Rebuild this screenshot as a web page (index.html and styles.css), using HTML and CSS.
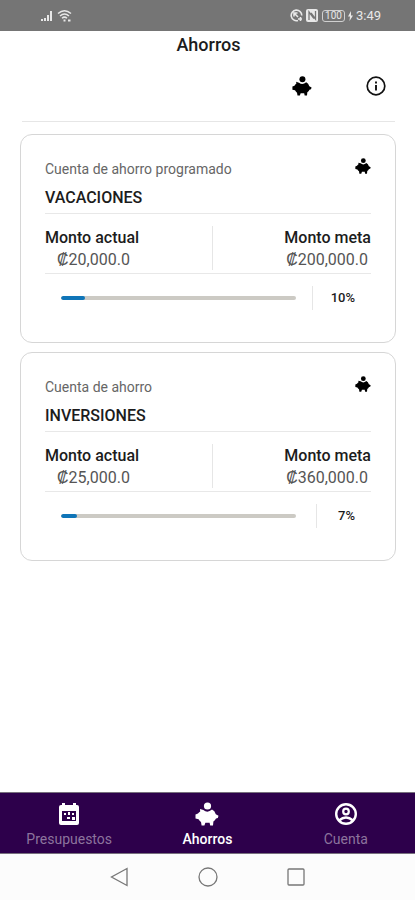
FILE: index.html
```html
<!DOCTYPE html>
<html lang="es">
<head>
    <meta charset="UTF-8">
    <meta name="viewport" content="width=device-width, initial-scale=1.0">
    <title>Ahorros</title>
    <link rel="stylesheet" href="styles.css">
</head>
<body>

    <svg class="sprite" aria-hidden="true">
        <symbol id="pig" viewBox="0 0 24 24">
            <circle cx="12.5" cy="4" r="3.6"/>
            <path d="M5 7 8.400 8Q12.500 11.500 17 7.600Q19.800 9 20.800 12.200L23.500 13.800 22.800 16 21 16.600Q20 18.600 18.400 19.400L18 23.500H15.200L14.600 20.800H10.400L9.400 23.500H6.600L6 20Q4.400 18.800 3.600 17.200L.5 16.400V12.600L3 11.600Q3.800 10.200 5.200 9.400Z"/>
        </symbol>
    </svg>

    <div class="status-bar">
        <div class="status-group">
            <svg width="13" height="12" viewBox="0 0 13 12" fill="#e8e8e8">
                <path d="M0 9h2v2H0zM3 8h2v3H3zM6 5h2v6H6zM9 1h2v10H9z"/>
            </svg>
            <svg width="16" height="14" viewBox="0 0 16 14" fill="none" stroke="#e8e8e8" stroke-width="1.5">
                <path d="M1 4.5Q7.5-1 14 4.5M3 7Q7.5 3 12 7M5 9.2Q7.5 7 10 9.2"/>
                <path d="M6.500 11.500h2M11 11.500h2.500" stroke-width="2"/>
            </svg>
        </div>
        <div class="status-group">
            <svg width="13" height="13" viewBox="0 0 13 13" fill="none" stroke="#e8e8e8" stroke-width="1.6">
                <path d="M8 11.500A5.300 5.300 0 1 1 11.800 6.500M4 7.500V4h3.500M4.500 4.500 8 8M8 10h4M10.500 8v4"/>
            </svg>
            <svg width="13" height="13" viewBox="0 0 13 13">
                <rect width="12" height="13" rx="2" fill="#e8e8e8"/>
                <path d="M3 11V3l5 6.500M9.500 2v8L5 4" fill="none" stroke="#757575" stroke-width="1.300"/>
            </svg>
            <span class="battery">100</span>
            <svg width="5" height="10" viewBox="0 0 5 10" fill="#e8e8e8"><path d="M3 0 0 5.500h2L1.500 10 5 4.500H3z"/></svg>
            <span class="clock">3:49</span>
        </div>
    </div>

    <header>
        <h1>Ahorros</h1>
        <div class="actions">
            <button type="button" aria-label="Nuevo ahorro">
                <svg width="20" height="20"><use href="#pig"/></svg>
            </button>
            <button type="button" aria-label="Información">
                <svg width="20" height="20" viewBox="0 0 20 20" fill="none" stroke="#111">
                    <circle cx="10" cy="10" r="8.800" stroke-width="1.700"/>
                    <path d="M10 9v5.500M10 5.500v2" stroke-width="1.900"/>
                </svg>
            </button>
        </div>
    </header>

    <main>
        <section class="card">
            <div class="card-top">
                <div>
                    <p class="type">Cuenta de ahorro programado</p>
                    <h2>VACACIONES</h2>
                </div>
                <svg width="16" height="16"><use href="#pig"/></svg>
            </div>
            <div class="amounts">
                <div class="amount">
                    <h3>Monto actual</h3>
                    <p>₡20,000.0</p>
                </div>
                <div class="amount goal">
                    <h3>Monto meta</h3>
                    <p>₡200,000.0</p>
                </div>
            </div>
            <div class="progress-row">
                <progress value="10" max="100" aria-label="Avance de vacaciones"></progress>
                <span class="percent">10%</span>
            </div>
        </section>

        <section class="card">
            <div class="card-top">
                <div>
                    <p class="type">Cuenta de ahorro</p>
                    <h2>INVERSIONES</h2>
                </div>
                <svg width="16" height="16"><use href="#pig"/></svg>
            </div>
            <div class="amounts">
                <div class="amount">
                    <h3>Monto actual</h3>
                    <p>₡25,000.0</p>
                </div>
                <div class="amount goal">
                    <h3>Monto meta</h3>
                    <p>₡360,000.0</p>
                </div>
            </div>
            <div class="progress-row">
                <progress value="7" max="100" aria-label="Avance de inversiones"></progress>
                <span class="percent">7%</span>
            </div>
        </section>
    </main>

    <nav class="tabs">
        <a href="#presupuestos">
            <svg width="24" height="24" viewBox="0 0 24 24">
                <path d="M4 3h1V1h3v2h8V1h3v2h1q2 0 2 2v16q0 2-2 2H4q-2 0-2-2V5q0-2 2-2z" fill="#fff"/>
                <path d="M5 9h14v10H5z" fill="#2d004b"/>
                <path d="M7 11h2v2H7zM11 10h2v3h-2zM15 11h2v2h-2zM10 15h3v2h-3zM15 15h3v3h-3z" fill="#fff"/>
            </svg>
            Presupuestos
        </a>
        <a href="#ahorros" class="active" aria-current="page">
            <svg width="24" height="24" fill="#fff"><use href="#pig"/></svg>
            Ahorros
        </a>
        <a href="#cuenta">
            <svg width="24" height="24" viewBox="0 0 24 24" fill="none" stroke="#fff">
                <circle cx="12" cy="12" r="9.800" stroke-width="2.400"/>
                <circle cx="12" cy="9.500" r="2.800" stroke-width="2.200"/>
                <path d="M5 18.500Q12 12.500 19 18.500" stroke-width="2.400"/>
            </svg>
            Cuenta
        </a>
    </nav>

    <div class="system-nav">
        <button type="button" aria-label="Atrás">
            <svg width="20" height="20" viewBox="0 0 20 20"><path d="M17 1.500v17L1.500 10z"/></svg>
        </button>
        <button type="button" aria-label="Inicio">
            <svg width="20" height="20" viewBox="0 0 20 20"><circle cx="10" cy="10" r="9"/></svg>
        </button>
        <button type="button" aria-label="Recientes">
            <svg width="20" height="20" viewBox="0 0 20 20"><rect x="2" y="2" width="16" height="16" rx="1"/></svg>
        </button>
    </div>

</body>
</html>
```

FILE: styles.css
```css
* {
    box-sizing: border-box;
}

body {
    margin: 0;
    min-height: 100vh;
    display: flex;
    flex-direction: column;
    font-family: Roboto, sans-serif;
    color: #1c1c1c;
    background-color: #fff;
}

h1, h2, h3, p {
    margin: 0;
    font-weight: 500;
}

button {
    display: flex;
    padding: 0;
    border: none;
    background: none;
    cursor: pointer;
}

.sprite {
    display: none;
}

/* Status bar */
.status-bar {
    display: flex;
    justify-content: space-between;
    align-items: center;
    height: 31px;
    padding: 0 34px 0 41px;
    background-color: #757575;
    color: #e8e8e8;
}

.status-group {
    display: flex;
    align-items: center;
    gap: 3px;
}

.battery {
    padding: 0 2px;
    border: 1px solid #d0d0d0;
    border-radius: 3px;
    font-size: 10px;
    line-height: 10px;
}

.clock {
    font-size: 13px;
}

/* Header */
header {
    margin: 0 20px 0 22px;
    height: 91px;
    border-bottom: 1px solid #e6e6e6;
}

h1 {
    font-size: 18px;
    line-height: 28px;
    text-align: center;
}

.actions {
    display: flex;
    justify-content: flex-end;
    align-items: center;
    gap: 54px;
    padding: 17px 9px 0 0;
}

/* Cards */
main {
    flex: 1;
    display: flex;
    flex-direction: column;
    gap: 9px;
    padding: 12px 19px 12px 20px;
}

.card {
    height: 209px;
    padding: 23px 24px;
    border: 1px solid #d6d6d6;
    border-radius: 12px;
}

.card-top {
    display: flex;
    justify-content: space-between;
    height: 56px;
    border-bottom: 1px solid #e8e8e8;
}

.type {
    font-size: 14px;
    line-height: 22px;
    font-weight: 400;
    color: #666;
}

h2 {
    font-size: 16px;
    line-height: 36px;
}

.amounts {
    display: grid;
    grid-template-columns: 1fr 1fr;
    column-gap: 8px;
    height: 60px;
    padding: 12px 0 3px;
    border-bottom: 1px solid #e8e8e8;
}

.amount h3 {
    font-size: 16px;
    line-height: 24px;
}

.amount p {
    padding: 0 3px 0 12px;
    font-size: 16px;
    line-height: 20px;
    font-weight: 400;
    color: #555;
}

.goal {
    border-left: 1px solid #e6e6e6;
    text-align: right;
}

.progress-row {
    display: flex;
    justify-content: space-between;
    align-items: center;
    padding: 12px 16px;
}

progress {
    appearance: none;
    flex: 0 1 235px;
    min-width: 0;
    height: 4px;
    border: none;
    border-radius: 2px;
    overflow: hidden;
    background-color: #cccac4;
}

progress::-webkit-progress-bar {
    background-color: #cccac4;
}

progress::-webkit-progress-value {
    border-radius: 2px;
    background-color: #0f75b8;
}

.percent {
    min-width: 39px;
    padding-left: 18px;
    border-left: 1px solid #e6e6e6;
    font-size: 13px;
    line-height: 24px;
    font-weight: 500;
    text-align: right;
}

/* Bottom tabs */
.tabs {
    display: grid;
    grid-template-columns: repeat(3, 1fr);
    height: 62px;
    border-top: 1px solid #77707d;
    border-bottom: 1px solid #77707d;
    background-color: #2d004b;
}

.tabs a {
    display: flex;
    flex-direction: column;
    align-items: center;
    gap: 4px;
    padding-top: 9px;
    font-size: 14px;
    line-height: 18px;
    color: #8c749d;
    text-decoration: none;
}

.tabs .active {
    font-weight: 500;
    color: #fff;
}

/* System navigation */
.system-nav {
    display: flex;
    justify-content: center;
    align-items: center;
    gap: 68px;
    height: 46px;
    background-color: #fcfcfc;
}

.system-nav svg {
    fill: none;
    stroke: #777;
    stroke-width: 1.3;
}
```
